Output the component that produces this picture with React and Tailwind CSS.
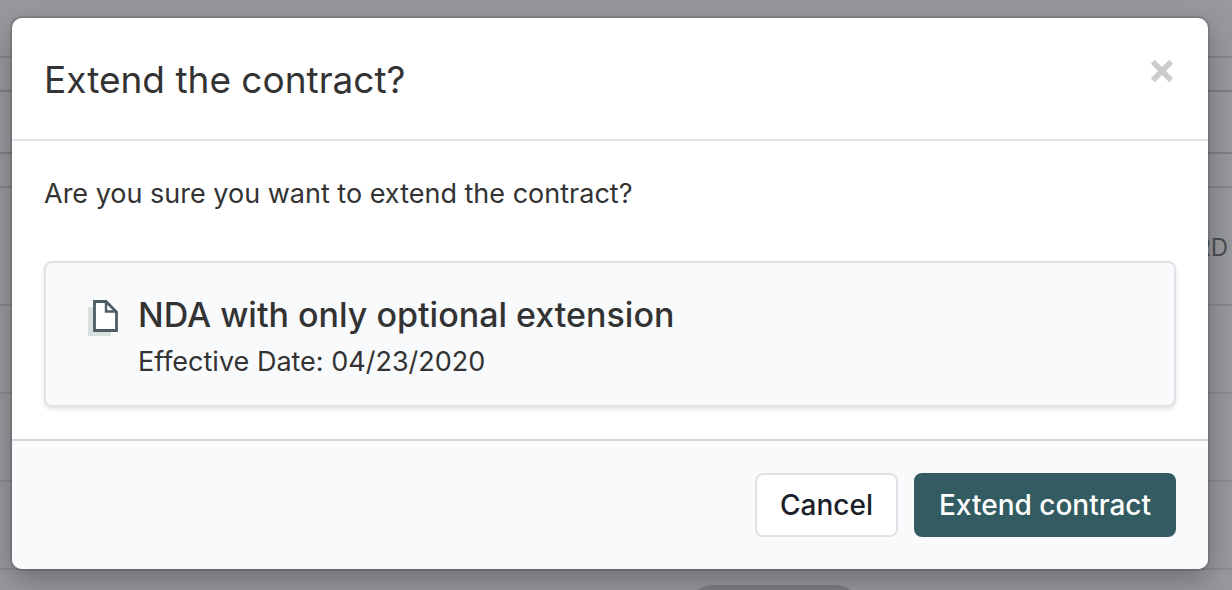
import React from 'react';

const contract = {
  name: 'NDA with only optional extension',
  effectiveDate: '04/23/2020',
};

function DocumentIcon() {
  return (
    <svg width="30" height="36" viewBox="0 0 30 36" className="shrink-0" aria-hidden="true">
      <path d="M0 7H23V36H0Z" fill="#d7dfdf" />
      <path d="M6.5 1.5H18L28.5 12V30.5H6.5Z" fill="#fff" stroke="#4d5d66" strokeWidth="2.8" />
      <path d="M18 1V11.5H28.5" fill="none" stroke="#4d5d66" strokeWidth="2.4" />
    </svg>
  );
}

function CloseIcon() {
  return (
    <svg width="24" height="24" viewBox="0 0 24 24" aria-hidden="true">
      <path d="M2.8 2.8L21.2 21.2M21.2 2.8L2.8 21.2" stroke="#cccccc" strokeWidth="5.6" />
    </svg>
  );
}

// Dimmed table behind the dialog
function PageBehind() {
  return (
    <div className="absolute inset-0 flex flex-col overflow-hidden text-[#4d4e52]" aria-hidden="true">
      <div className="h-[58px] shrink-0 border-b-2 border-[#85868a]" />
      <div className="h-[34px] shrink-0 border-b-2 border-[#7f8084]" />
      <div className="h-[62px] shrink-0 border-b-2 border-[#7f8084]" />
      <div className="h-[34px] shrink-0 border-b-2 border-[#85868a]" />
      <div className="flex h-[118px] shrink-0 items-center justify-end border-b-2 border-[#88898d] pt-1 pr-1 text-2xl">RD</div>
      <div className="h-[88px] shrink-0 border-b-2 border-[#8b8c90]" />
      <div className="h-[88px] shrink-0 border-b-2 border-[#8b8c90]" />
      <div className="h-[88px] shrink-0 border-b-2 border-[#8b8c90]" />
      <div className="flex shrink-0 justify-center pt-[15px] pl-[316px]">
        <div className="h-16 w-[172px] rounded-3xl bg-[#7f7f83]" />
      </div>
    </div>
  );
}

export default function App() {
  return (
    <div className="relative min-h-screen bg-[#98999d] pt-[18px] pr-6 pb-[21px] pl-3 font-['Inter',sans-serif] text-[#333333]">
      <PageBehind />

      <div
        role="dialog"
        aria-modal="true"
        aria-labelledby="dialog-title"
        className="relative rounded-[10px] bg-white shadow-[0_0_0_2px_rgba(70,76,84,0.25),0_10px_30px_rgba(0,0,0,0.3)]"
      >
        <header className="flex items-start justify-between border-b-2 border-[#e4e4e6] px-8 pt-8 pb-[30px]">
          <h1 id="dialog-title" className="text-[37px] leading-[59px]">Extend the contract?</h1>
          <button type="button" aria-label="Close" className="mt-[9px] mr-0.5">
            <CloseIcon />
          </button>
        </header>

        <div className="p-8">
          <p className="text-[27px] leading-[42px]">Are you sure you want to extend the contract?</p>
          <section className="mt-[46px] flex items-start gap-5 rounded-lg border-2 border-[#e2e2e6] bg-[#f9fafc] px-[42px] pt-7 pb-5 shadow-[0_2px_4px_rgba(0,0,0,0.12)]">
            <div className="pt-[9px]">
              <DocumentIcon />
            </div>
            <div>
              <h2 className="text-[34px] leading-[48px] font-medium">{contract.name}</h2>
              <p className="text-[27px] leading-[46px]">Effective Date: {contract.effectiveDate}</p>
            </div>
          </section>
        </div>

        <footer className="flex justify-end gap-4 rounded-b-[10px] border-t-2 border-[#d5d6d9] bg-[#f9fafc] p-8">
          <button type="button" className="h-16 rounded-lg border-2 border-[#e2e2e6] bg-white px-[23px] text-[28px] font-medium text-[#1c1f2a]">
            Cancel
          </button>
          <button type="button" className="h-16 rounded-lg bg-[#335c62] px-[25px] text-[28px] font-medium text-white">
            Extend contract
          </button>
        </footer>
      </div>
    </div>
  );
}
